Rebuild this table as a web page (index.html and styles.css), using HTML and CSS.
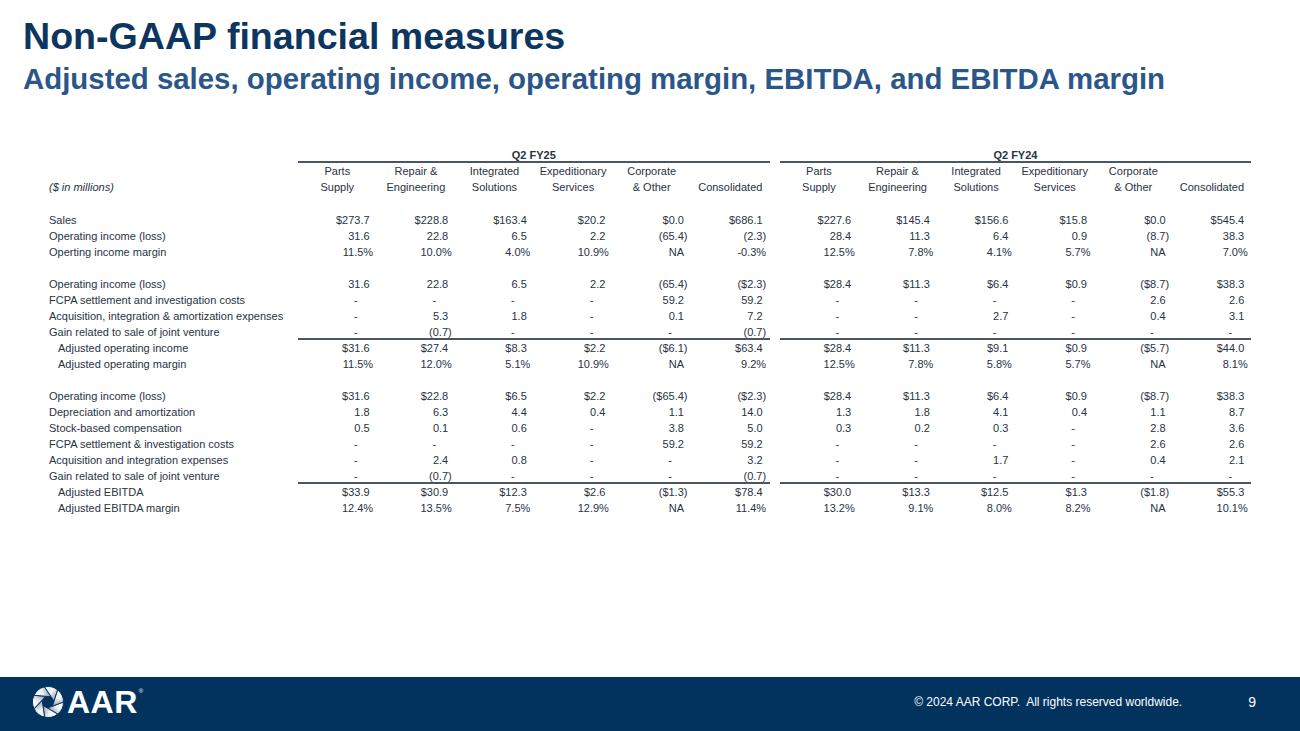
FILE: index.html
```html
<!DOCTYPE html>
<html lang="en">
<head>
<meta charset="utf-8">
<title>Non-GAAP financial measures</title>
<link rel="stylesheet" href="styles.css">
</head>
<body>
<div class="page">
  <header class="head">
    <h1 class="title">Non-GAAP financial measures</h1>
    <h2 class="subtitle">Adjusted sales, operating income, operating margin, EBITDA, and EBITDA margin</h2>
  </header>

  <table class="fin">
    <colgroup>
      <col class="c-lbl">
      <col class="c-v"><col class="c-v"><col class="c-v"><col class="c-v"><col class="c-v"><col class="c-v">
      <col class="c-sp">
      <col class="c-v"><col class="c-v"><col class="c-v"><col class="c-v"><col class="c-v"><col class="c-v">
    </colgroup>
    <tbody>
      <tr>
        <td class="l"></td>
        <td class="grp" colspan="6">Q2 FY25</td>
        <td class="sp"></td>
        <td class="grp" colspan="6">Q2 FY24</td>
      </tr>
      <tr>
        <td class="l"></td>
        <td class="h">Parts</td><td class="h">Repair &amp;</td><td class="h">Integrated</td><td class="h">Expeditionary</td><td class="h">Corporate</td><td class="h"></td>
        <td class="sp"></td>
        <td class="h">Parts</td><td class="h">Repair &amp;</td><td class="h">Integrated</td><td class="h">Expeditionary</td><td class="h">Corporate</td><td class="h"></td>
      </tr>
      <tr>
        <td class="l mil">($ in millions)</td>
        <td class="h">Supply</td><td class="h">Engineering</td><td class="h">Solutions</td><td class="h">Services</td><td class="h">&amp; Other</td><td class="h">Consolidated</td>
        <td class="sp"></td>
        <td class="h">Supply</td><td class="h">Engineering</td><td class="h">Solutions</td><td class="h">Services</td><td class="h">&amp; Other</td><td class="h">Consolidated</td>
      </tr>
      <tr class="gap1"><td colspan="14"></td></tr>

      <tr>
        <td class="l">Sales</td>
        <td>$273.7</td><td>$228.8</td><td>$163.4</td><td>$20.2</td><td>$0.0</td><td>$686.1</td>
        <td class="sp"></td>
        <td>$227.6</td><td>$145.4</td><td>$156.6</td><td>$15.8</td><td>$0.0</td><td>$545.4</td>
      </tr>
      <tr>
        <td class="l">Operating income (loss)</td>
        <td>31.6</td><td>22.8</td><td>6.5</td><td>2.2</td><td class="p">(65.4)</td><td class="p">(2.3)</td>
        <td class="sp"></td>
        <td>28.4</td><td>11.3</td><td>6.4</td><td>0.9</td><td class="p">(8.7)</td><td>38.3</td>
      </tr>
      <tr>
        <td class="l">Operting income margin</td>
        <td class="p">11.5%</td><td class="p">10.0%</td><td class="p">4.0%</td><td class="p">10.9%</td><td>NA</td><td class="p">-0.3%</td>
        <td class="sp"></td>
        <td class="p">12.5%</td><td class="p">7.8%</td><td class="p">4.1%</td><td class="p">5.7%</td><td>NA</td><td class="p">7.0%</td>
      </tr>
      <tr class="gap"><td colspan="14"></td></tr>

      <tr>
        <td class="l">Operating income (loss)</td>
        <td>31.6</td><td>22.8</td><td>6.5</td><td>2.2</td><td class="p">(65.4)</td><td class="p">($2.3)</td>
        <td class="sp"></td>
        <td>$28.4</td><td>$11.3</td><td>$6.4</td><td>$0.9</td><td class="p">($8.7)</td><td>$38.3</td>
      </tr>
      <tr>
        <td class="l">FCPA settlement and investigation costs</td>
        <td class="d">-</td><td class="d">-</td><td class="d">-</td><td class="d">-</td><td>59.2</td><td>59.2</td>
        <td class="sp"></td>
        <td class="d">-</td><td class="d">-</td><td class="d">-</td><td class="d">-</td><td>2.6</td><td>2.6</td>
      </tr>
      <tr>
        <td class="l">Acquisition, integration &amp; amortization expenses</td>
        <td class="d">-</td><td>5.3</td><td>1.8</td><td class="d">-</td><td>0.1</td><td>7.2</td>
        <td class="sp"></td>
        <td class="d">-</td><td class="d">-</td><td>2.7</td><td class="d">-</td><td>0.4</td><td>3.1</td>
      </tr>
      <tr class="rule">
        <td class="l">Gain related to sale of joint venture</td>
        <td class="d">-</td><td class="p">(0.7)</td><td class="d">-</td><td class="d">-</td><td class="d">-</td><td class="p">(0.7)</td>
        <td class="sp"></td>
        <td class="d">-</td><td class="d">-</td><td class="d">-</td><td class="d">-</td><td class="d">-</td><td class="d">-</td>
      </tr>
      <tr>
        <td class="l in">Adjusted operating income</td>
        <td>$31.6</td><td>$27.4</td><td>$8.3</td><td>$2.2</td><td class="p">($6.1)</td><td>$63.4</td>
        <td class="sp"></td>
        <td>$28.4</td><td>$11.3</td><td>$9.1</td><td>$0.9</td><td class="p">($5.7)</td><td>$44.0</td>
      </tr>
      <tr>
        <td class="l in">Adjusted operating margin</td>
        <td class="p">11.5%</td><td class="p">12.0%</td><td class="p">5.1%</td><td class="p">10.9%</td><td>NA</td><td class="p">9.2%</td>
        <td class="sp"></td>
        <td class="p">12.5%</td><td class="p">7.8%</td><td class="p">5.8%</td><td class="p">5.7%</td><td>NA</td><td class="p">8.1%</td>
      </tr>
      <tr class="gap"><td colspan="14"></td></tr>

      <tr>
        <td class="l">Operating income (loss)</td>
        <td>$31.6</td><td>$22.8</td><td>$6.5</td><td>$2.2</td><td class="p">($65.4)</td><td class="p">($2.3)</td>
        <td class="sp"></td>
        <td>$28.4</td><td>$11.3</td><td>$6.4</td><td>$0.9</td><td class="p">($8.7)</td><td>$38.3</td>
      </tr>
      <tr>
        <td class="l">Depreciation and amortization</td>
        <td>1.8</td><td>6.3</td><td>4.4</td><td>0.4</td><td>1.1</td><td>14.0</td>
        <td class="sp"></td>
        <td>1.3</td><td>1.8</td><td>4.1</td><td>0.4</td><td>1.1</td><td>8.7</td>
      </tr>
      <tr>
        <td class="l">Stock-based compensation</td>
        <td>0.5</td><td>0.1</td><td>0.6</td><td class="d">-</td><td>3.8</td><td>5.0</td>
        <td class="sp"></td>
        <td>0.3</td><td>0.2</td><td>0.3</td><td class="d">-</td><td>2.8</td><td>3.6</td>
      </tr>
      <tr>
        <td class="l">FCPA settlement &amp; investigation costs</td>
        <td class="d">-</td><td class="d">-</td><td class="d">-</td><td class="d">-</td><td>59.2</td><td>59.2</td>
        <td class="sp"></td>
        <td class="d">-</td><td class="d">-</td><td class="d">-</td><td class="d">-</td><td>2.6</td><td>2.6</td>
      </tr>
      <tr>
        <td class="l">Acquisition and integration expenses</td>
        <td class="d">-</td><td>2.4</td><td>0.8</td><td class="d">-</td><td class="d">-</td><td>3.2</td>
        <td class="sp"></td>
        <td class="d">-</td><td class="d">-</td><td>1.7</td><td class="d">-</td><td>0.4</td><td>2.1</td>
      </tr>
      <tr class="rule">
        <td class="l">Gain related to sale of joint venture</td>
        <td class="d">-</td><td class="p">(0.7)</td><td class="d">-</td><td class="d">-</td><td class="d">-</td><td class="p">(0.7)</td>
        <td class="sp"></td>
        <td class="d">-</td><td class="d">-</td><td class="d">-</td><td class="d">-</td><td class="d">-</td><td class="d">-</td>
      </tr>
      <tr>
        <td class="l in">Adjusted EBITDA</td>
        <td>$33.9</td><td>$30.9</td><td>$12.3</td><td>$2.6</td><td class="p">($1.3)</td><td>$78.4</td>
        <td class="sp"></td>
        <td>$30.0</td><td>$13.3</td><td>$12.5</td><td>$1.3</td><td class="p">($1.8)</td><td>$55.3</td>
      </tr>
      <tr>
        <td class="l in">Adjusted EBITDA margin</td>
        <td class="p">12.4%</td><td class="p">13.5%</td><td class="p">7.5%</td><td class="p">12.9%</td><td>NA</td><td class="p">11.4%</td>
        <td class="sp"></td>
        <td class="p">13.2%</td><td class="p">9.1%</td><td class="p">8.0%</td><td class="p">8.2%</td><td>NA</td><td class="p">10.1%</td>
      </tr>
    </tbody>
  </table>

  <footer class="foot">
    <div class="logo">
      <svg class="mark" viewBox="-16 -16 32 32" width="32" height="32" aria-hidden="true">
        <defs>
          <linearGradient id="bladeGrad" x1="1" y1="0" x2="0" y2="0.6">
            <stop offset="0" stop-color="#ffffff"/>
            <stop offset="0.5" stop-color="#eef1f5"/>
            <stop offset="1" stop-color="#8793a6"/>
          </linearGradient>
          <path id="blade" d="M15.5,0 A15.5,15.5 0 0 1 9.664,12.118 L-0.526,6.082 Z" fill="url(#bladeGrad)" stroke="#02335f" stroke-width="0.9" stroke-linejoin="round"/>
        </defs>
        <use href="#blade"/>
        <use href="#blade" transform="rotate(51.43)"/>
        <use href="#blade" transform="rotate(102.86)"/>
        <use href="#blade" transform="rotate(154.29)"/>
        <use href="#blade" transform="rotate(205.71)"/>
        <use href="#blade" transform="rotate(257.14)"/>
        <use href="#blade" transform="rotate(308.57)"/>
      </svg>
      <span class="aar">AAR</span><span class="reg">®</span>
    </div>
    <span class="copy">© 2024 AAR CORP.&nbsp; All rights reserved worldwide.</span>
    <span class="pg">9</span>
  </footer>
</div>
</body>
</html>
```

FILE: styles.css
```css
* { box-sizing: border-box; }

html, body {
  margin: 0;
  padding: 0;
}

body {
  width: 1300px;
  height: 731px;
  overflow: hidden;
  background: #ffffff;
  font-family: "Liberation Sans", Arial, sans-serif;
}

.page {
  height: 731px;
  display: flex;
  flex-direction: column;
}

/* ---------- heading ---------- */
.head {
  padding: 17px 0 0 23px;
}

.title {
  margin: 0;
  font-size: 37.6px;
  line-height: 38px;
  font-weight: 700;
  color: #0c3660;
}

.subtitle {
  margin: 9px 0 0;
  font-size: 29.4px;
  line-height: 30px;
  font-weight: 700;
  color: #2b5689;
}

/* ---------- table ---------- */
.fin {
  margin: 53px 0 0 48px;
  width: 1203px;
  table-layout: fixed;
  border-collapse: collapse;
  border-spacing: 0;
  font-size: 11px;
  line-height: 16px;
  color: #29323f;
}

.c-lbl { width: 250px; }
.c-v { width: 78.6px; }
.c-sp { width: 10px; }

.fin td {
  height: 16px;
  padding: 0 7px 0 0;
  text-align: right;
  white-space: nowrap;
  vertical-align: middle;
}

.fin td.l {
  text-align: left;
  padding: 0 0 0 1px;
}

.fin td.l.in { padding-left: 10px; }

.fin td.mil { font-style: italic; }

.fin td.p { padding-right: 3.5px; }

.fin td.d { padding-right: 19px; }

.fin td.sp { padding: 0; }

.fin td.h {
  text-align: center;
  padding: 0;
}

.fin td.grp {
  text-align: center;
  padding: 0;
  font-weight: 700;
  background: linear-gradient(#4a5664, #4a5664) left bottom / 100% 2px no-repeat;
}

.fin tr.gap1 td { height: 17px; padding: 0; }
.fin tr.gap td { height: 16px; padding: 0; }

.fin tr.rule td:not(.l):not(.sp) {
  background: linear-gradient(#4a5664, #4a5664) left bottom / 100% 2px no-repeat;
}

/* ---------- footer ---------- */
.foot {
  margin-top: auto;
  height: 54px;
  background: #02335f;
  color: #ffffff;
  display: flex;
  align-items: center;
  padding: 0 44px 4px 32px;
}

.logo {
  display: flex;
  align-items: center;
  height: 32px;
}

.mark {
  display: block;
  width: 32px;
  height: 32px;
}

.aar {
  margin-left: 3px;
  font-size: 32px;
  line-height: 1;
  font-weight: 700;
  letter-spacing: 0.5px;
}

.reg {
  align-self: flex-start;
  font-size: 6px;
  line-height: 1;
  margin-top: 2px;
  margin-left: 1px;
}

.copy {
  margin-left: auto;
  margin-right: 66px;
  font-size: 12px;
}

.pg {
  font-size: 14px;
}
```
